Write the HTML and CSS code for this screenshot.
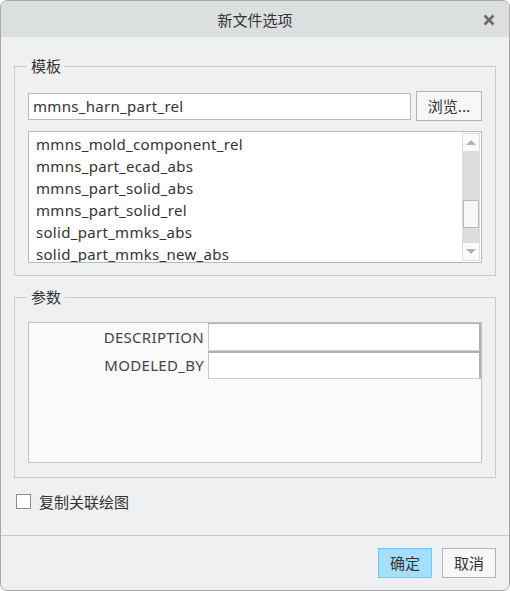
FILE: index.html
```html
<!DOCTYPE html>
<html lang="zh-CN">
<head>
<meta charset="utf-8">
<title>新文件选项</title>
<link rel="stylesheet" href="styles.css">
</head>
<body>
<div class="window">
  <div class="titlebar">
    <span class="title">新文件选项</span>
    <svg class="close" width="12" height="12" viewBox="0 0 12 12"><path d="M1.5 1.5 L10.5 10.5 M10.5 1.5 L1.5 10.5" stroke="#6b6b6b" stroke-width="2.6" stroke-linecap="butt"/></svg>
  </div>
  <div class="content">
    <fieldset class="group group-template">
      <legend>模板</legend>
      <div class="path-row">
        <div class="text-input">mmns_harn_part_rel</div>
        <button class="btn btn-browse">浏览...</button>
      </div>
      <div class="listbox">
        <ul class="list-items">
          <li>mmns_mold_component_rel</li>
          <li>mmns_part_ecad_abs</li>
          <li>mmns_part_solid_abs</li>
          <li>mmns_part_solid_rel</li>
          <li>solid_part_mmks_abs</li>
          <li>solid_part_mmks_new_abs</li>
        </ul>
        <div class="scrollbar">
          <div class="sb-btn"><span class="tri-up"></span></div>
          <div class="sb-track"><div class="sb-thumb"></div></div>
          <div class="sb-btn"><span class="tri-down"></span></div>
        </div>
      </div>
    </fieldset>
    <fieldset class="group group-params">
      <legend>参数</legend>
      <div class="param-table">
        <div class="param-row first">
          <div class="param-label">DESCRIPTION</div>
          <div class="param-value"></div>
        </div>
        <div class="param-row">
          <div class="param-label">MODELED_BY</div>
          <div class="param-value"></div>
        </div>
      </div>
    </fieldset>
    <label class="check-row">
      <span class="checkbox"></span>
      <span class="check-label">复制关联绘图</span>
    </label>
  </div>
  <div class="footer">
    <button class="btn btn-ok">确定</button>
    <button class="btn btn-cancel">取消</button>
  </div>
</div>
</body>
</html>
```

FILE: styles.css
```css
* { box-sizing: border-box; }
html, body {
  margin: 0;
  padding: 0;
  background: #ffffff;
}
body {
  font-family: "Noto Sans", "Noto Sans CJK SC", sans-serif;
  font-size: 15px;
  color: #3a3a3a;
}
.window {
  width: 510px;
  height: 591px;
  border: 1px solid #a8a8a8;
  border-radius: 7px;
  overflow: hidden;
  background: #eef0f2;
  display: flex;
  flex-direction: column;
}
.titlebar {
  height: 36px;
  flex: none;
  background: #dcdfe0;
  display: flex;
  align-items: center;
  justify-content: center;
  position: relative;
}
.title {
  font-family: "Noto Sans CJK SC", sans-serif;
  font-size: 15px;
  line-height: 20px;
  color: #333;
  margin-top: 1px;
}
.close {
  position: absolute;
  right: 14px;
  top: 13px;
}
.content {
  flex: 1;
  padding: 19px 13px 0 13px;
  display: flex;
  flex-direction: column;
}
.group {
  margin: 0;
  border: 1px solid #c9cbcd;
  padding: 0 13px 12px 13px;
  min-width: 0;
}
.group legend {
  font-family: "Noto Sans CJK SC", sans-serif;
  font-size: 15px;
  line-height: 20px;
  padding: 0 4px;
  margin-left: -1px;
  color: #333;
}
.path-row {
  margin-top: 15px;
  display: flex;
  align-items: center;
  gap: 5px;
  height: 30px;
}
.text-input {
  flex: 1;
  height: 27px;
  background: #fff;
  border: 1px solid #b8babc;
  padding-left: 4px;
  line-height: 25px;
  color: #333;
  letter-spacing: 0.3px;
}
.btn {
  font-family: "Noto Sans CJK SC", sans-serif;
  font-size: 15px;
  color: #333;
  height: 30px;
  padding: 0;
  border: 1px solid #b3b3b3;
  background: #f7f7f7;
  line-height: 28px;
}
.btn-browse {
  width: 66px;
}
.listbox {
  margin-top: 10px;
  height: 132px;
  background: #fff;
  border: 1px solid #b8babc;
  display: flex;
  overflow: hidden;
}
.list-items {
  flex: 1;
  list-style: none;
  margin: 0;
  padding: 1px 0 0 7px;
  overflow: hidden;
}
.list-items li {
  height: 22px;
  line-height: 22px;
  color: #333;
  white-space: nowrap;
  letter-spacing: 0.3px;
}
.scrollbar {
  width: 18px;
  margin: 1px 1px 1px 0;
  border: 1px solid #dcdcdc;
  display: flex;
  flex-direction: column;
}
.sb-btn {
  height: 17px;
  flex: none;
  background: #fafafa;
  display: flex;
  align-items: center;
  justify-content: center;
}
.tri-up, .tri-down {
  width: 0;
  height: 0;
  border-left: 5px solid transparent;
  border-right: 5px solid transparent;
}
.tri-up { border-bottom: 5px solid #b0b0b0; }
.tri-down { border-top: 5px solid #b0b0b0; }
.sb-track {
  flex: 1;
  background: #dcdddf;
  padding-top: 49px;
}
.sb-thumb {
  height: 28px;
  background: #f7f7f7;
  border: 1px solid #b9b9b9;
}
.group-params {
  margin-top: 11px;
  padding-bottom: 14px;
}
.param-table {
  margin-top: 15px;
  height: 141px;
  background: #fafafa;
  border: 1px solid #bfc1c3;
}
.param-row {
  display: flex;
  height: 28px;
}
.param-label {
  width: 179px;
  text-align: right;
  padding-right: 4px;
  line-height: 28px;
  color: #444;
  letter-spacing: 0.3px;
}
.param-value {
  flex: 1;
  background: #fff;
  border-left: 1px solid #c4c4c4;
  border-top: 2px solid #b1b1b1;
  border-right: 2px solid #b1b1b1;
  border-bottom: 1px solid #cfcfcf;
}
.param-row.first .param-value {
  border-top: 1px solid #b1b1b1;
}
.check-row {
  margin-top: 15px;
  margin-left: 2px;
  display: flex;
  align-items: center;
  gap: 8px;
  height: 17px;
}
.checkbox {
  width: 15px;
  height: 15px;
  border: 1px solid #8c8c8c;
  background: #fff;
}
.check-label {
  font-family: "Noto Sans CJK SC", sans-serif;
  font-size: 15px;
  line-height: 17px;
  color: #333;
}
.footer {
  height: 55px;
  flex: none;
  border-top: 1px solid #c8c8c8;
  display: flex;
  justify-content: flex-end;
  align-items: flex-start;
  padding: 12px 13px 0 0;
  gap: 10px;
}
.btn-ok {
  width: 54px;
  background: #a6defd;
  border-color: #6cc8f4;
}
.btn-cancel {
  width: 54px;
}
```
